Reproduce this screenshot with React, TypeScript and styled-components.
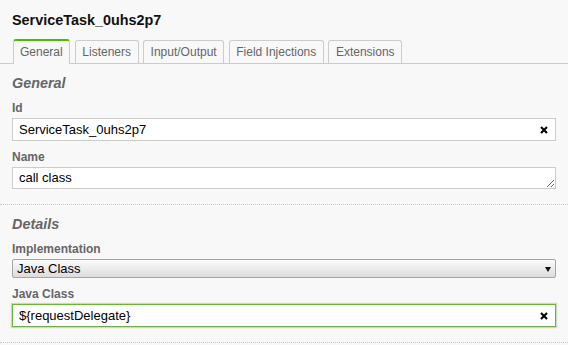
import React from "react";
import styled, { createGlobalStyle } from "styled-components";

const GlobalStyle = createGlobalStyle`
  html, body { margin: 0; padding: 0; background: #f8f8f8; }
  body { font-family: "Liberation Sans", Arial, sans-serif; }
  * { box-sizing: border-box; }
`;

const Panel = styled.div`
  width: 568px;
  min-height: 345px;
  background: #f8f8f8;
`;

const Header = styled.div`
  padding: 12px 12px 0;
`;

const Title = styled.div`
  font-size: 14.4px;
  font-weight: bold;
  line-height: 17px;
  color: #111;
`;

const TabBar = styled.div`
  box-sizing: content-box;
  margin-top: 10px;
  height: 24px;
  display: flex;
  align-items: flex-end;
  gap: 4.6px;
  padding: 0 12.5px;
  border-bottom: 1px solid #ccc;
`;

const Tab = styled.div<{ $active?: boolean }>`
  height: ${(p) => (p.$active ? "25px" : "23px")};
  margin-bottom: ${(p) => (p.$active ? "-1px" : "0")};
  padding: 0 6.5px ${(p) => (p.$active ? "1px" : "0")};
  display: flex;
  align-items: center;
  border: 1px solid #ccc;
  border-bottom: none;
  border-top: ${(p) => (p.$active ? "2px solid #52b415" : "1px solid #ccc")};
  border-radius: 3px 3px 0 0;
  background: #f8f8f8;
  font-size: 12px;
  color: #666;
  white-space: nowrap;
`;

const Group = styled.div`
  padding: 0 12px 15px;
  border-bottom: 1px dotted #c8c8c8;
`;

const GroupLabel = styled.div`
  margin: 11px 0 9px;
  font-size: 14.4px;
  font-weight: bold;
  font-style: italic;
  line-height: 17px;
  color: #666;
`;

const Field = styled.div`
  margin-bottom: 9px;
  &:last-child { margin-bottom: 0; }
`;

const Label = styled.label`
  display: block;
  font-size: 12px;
  font-weight: bold;
  line-height: 14px;
  color: #666;
  margin-bottom: 3px;
`;

const InputWrap = styled.div`
  position: relative;
`;

const TextInput = styled.input<{ $focused?: boolean }>`
  display: block;
  width: 100%;
  height: 23px;
  margin: 0;
  padding: 0 24px 0 6px;
  border: 1px solid ${(p) => (p.$focused ? "#6cb33f" : "#ccc")};
  box-shadow: ${(p) => (p.$focused ? "0 0 1px 1px rgba(108,179,63,0.35)" : "none")};
  background: #fff;
  font-family: "Liberation Sans", Arial, sans-serif;
  font-size: 13px;
  color: #000;
  outline: none;
`;

const TextArea = styled.textarea`
  display: block;
  width: 100%;
  height: 22px;
  margin: 0;
  padding: 2px 6px 0;
  border: 1px solid #ccc;
  background: #fff;
  font-family: "Liberation Sans", Arial, sans-serif;
  font-size: 13px;
  line-height: 15px;
  color: #000;
  resize: vertical;
  overflow: hidden;
  outline: none;
`;

const Select = styled.select`
  display: block;
  width: 100%;
  height: 19px;
  margin: 0;
  padding: 0 20px 0 4px;
  border: 1px solid #a6a6a6;
  border-radius: 2px;
  background: linear-gradient(#fbfbfb, #dcdcdc);
  appearance: none;
  -webkit-appearance: none;
  font-family: "Liberation Sans", Arial, sans-serif;
  font-size: 13px;
  line-height: 17px;
  color: #000;
  outline: none;
`;

const ClearButton = styled.span`
  position: absolute;
  right: 8px;
  top: 50%;
  width: 8px;
  height: 8px;
  margin-top: -4px;
  display: flex;
`;

const Caret = styled.span`
  position: absolute;
  right: 5px;
  top: 50%;
  width: 6px;
  height: 5px;
  margin-top: -2px;
  display: flex;
`;

const ClearIcon = () => (
  <ClearButton>
    <svg width="8" height="8" viewBox="0 0 8 8">
      <path d="M1 1 L7 7 M7 1 L1 7" stroke="#000" strokeWidth="2.1" strokeLinecap="butt" />
    </svg>
  </ClearButton>
);

const CaretIcon = () => (
  <Caret>
    <svg width="6" height="5" viewBox="0 0 6 5">
      <polygon points="0,0 6,0 3,5" fill="#111" />
    </svg>
  </Caret>
);

const tabs = ["General", "Listeners", "Input/Output", "Field Injections", "Extensions"];

export default function App() {
  return (
    <>
      <GlobalStyle />
      <Panel>
        <Header>
          <Title>ServiceTask_0uhs2p7</Title>
        </Header>
        <TabBar>
          {tabs.map((t, i) => (
            <Tab key={t} $active={i === 0}>
              {t}
            </Tab>
          ))}
        </TabBar>
        <Group>
          <GroupLabel>General</GroupLabel>
          <Field>
            <Label>Id</Label>
            <InputWrap>
              <TextInput defaultValue="ServiceTask_0uhs2p7" />
              <ClearIcon />
            </InputWrap>
          </Field>
          <Field>
            <Label>Name</Label>
            <TextArea defaultValue="call class" rows={1} />
          </Field>
        </Group>
        <Group>
          <GroupLabel>Details</GroupLabel>
          <Field>
            <Label>Implementation</Label>
            <InputWrap>
              <Select defaultValue="class">
                <option value="class">Java Class</option>
                <option value="expression">Expression</option>
                <option value="delegateExpression">Delegate Expression</option>
              </Select>
              <CaretIcon />
            </InputWrap>
          </Field>
          <Field>
            <Label>Java Class</Label>
            <InputWrap>
              <TextInput $focused defaultValue="${requestDelegate}" />
              <ClearIcon />
            </InputWrap>
          </Field>
        </Group>
      </Panel>
    </>
  );
}
